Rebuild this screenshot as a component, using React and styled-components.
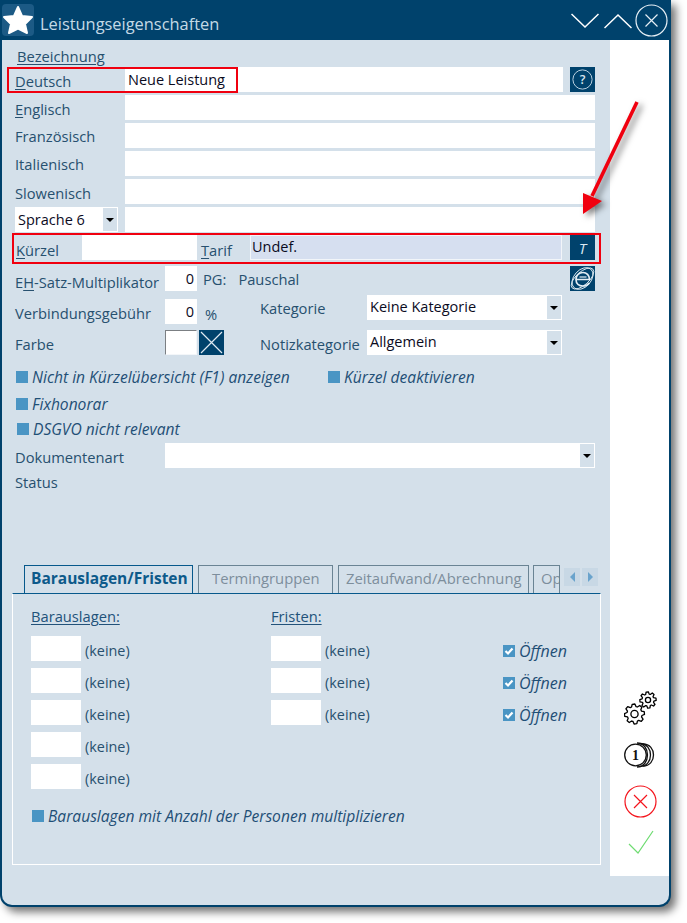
import React from "react";
import styled, { createGlobalStyle } from "styled-components";

const Global = createGlobalStyle`
  html, body { margin: 0; padding: 0; background: #fff; }
  body { font-family: "Open Sans", "Noto Sans", sans-serif; font-size: 14.7px; color: #27506f; }
  * { box-sizing: border-box; }
  u { text-underline-offset: 2px; }
`;

const BLUE = "#00426c";
const PANE = "#d4e0ea";

const Page = styled.div`position: relative; width: 687px; height: 923px; overflow: hidden;`;
const Window = styled.div`
  width: 671px; height: 907px; display: flex; flex-direction: column; background: ${PANE};
  border: 2px solid ${BLUE}; border-top: 0; border-radius: 0 0 12px 12px;
  box-shadow: 5px 5px 8px rgba(0,0,0,.55);
`;
const TitleBar = styled.div`
  height: 40px; margin: 0 -2px; background: ${BLUE}; display: flex; align-items: center;
  padding: 0 3px 0 2px; flex: none;
`;
const Logo = styled.div`
  width: 32px; height: 32px; background: #1c5a85; border-radius: 4px; display: flex;
  align-items: center; justify-content: center; flex: none; margin-top: -1px;
`;
const Title = styled.div`margin-left: 6px; font-size: 16.4px; color: #c4dae6; flex: 1; padding-top: 6px;`;
const WinControls = styled.div`display: flex; align-items: center;`;
const Body = styled.div`flex: 1; display: flex; min-height: 0;`;
const Main = styled.div`width: 608px; flex: none; padding: 0 15px 0 13px; display: flex; flex-direction: column;`;
const Side = styled.div`
  width: 60px; height: 836px; background: #fff; display: flex; flex-direction: column;
  align-items: center; padding: 0 0 21px 2px; justify-content: flex-end;
`;
const SideIcon = styled.div`display: flex; margin-top: ${p => p.$mt || 0}px;`;
const Heading = styled.div`height: 27px; padding: 7px 0 0 2px; line-height: 19px; text-decoration: underline; text-underline-offset: 2px;`;
const Rows = styled.div`display: flex; flex-direction: column; gap: 3px;`;
const Row = styled.div`display: flex; align-items: flex-start; height: 25px;`;
const Label = styled.div`
  width: ${p => p.$w || 110}px; flex: none; line-height: 19px; padding-top: ${p => p.$pt ?? 5}px;
  margin-left: ${p => p.$ml || 0}px; white-space: nowrap;
`;
const Field = styled.div`
  height: 25px; background: #fff; color: #0b0b1e; line-height: 25px; padding: 0 3px;
  font-size: 14.5px;
  width: ${p => (p.$w ? p.$w + "px" : "auto")}; flex: ${p => (p.$w ? "none" : 1)};
  text-align: ${p => p.$align || "left"}; white-space: nowrap; overflow: hidden;
  margin-left: ${p => p.$ml || 0}px;
`;
const Spacer = styled.div`flex: 1;`;
const TarifField = styled(Field)`background: #d6dff0; border: 1px solid #f2f5f9; line-height: 21px; padding: 0 1px;`;
const SquareBtn = styled.div`
  width: 25px; height: 25px; background: ${BLUE}; flex: none; display: flex; align-items: center;
  justify-content: center; color: #dce9f2; margin-left: ${p => p.$ml || 0}px; margin-top: ${p => p.$mt || 0}px;
`;
const TGlyph = styled.span`font-style: italic; font-size: 15px;`;
const SelectBox = styled.div`
  height: 25px; background: #fff; color: #0b0b1e; display: flex; width: ${p => p.$w ? p.$w + "px" : "auto"};
  flex: ${p => (p.$w ? "none" : 1)}; padding: 1px; margin-left: ${p => p.$ml || 0}px;
`;
const SelectText = styled.div`flex: 1; line-height: ${p => p.$lh || 22}px; padding-left: 2px; white-space: nowrap; font-size: 14.5px;`;
const SelectArrow = styled.div`
  width: 14px; background: ${PANE}; display: flex; align-items: center; justify-content: center;
  &::after { content: ""; border: 4px solid transparent; border-top: 4px solid #000; border-bottom: 0; }
`;
const PlainText = styled.div`line-height: 19px; padding-top: ${p => p.$pt ?? 0}px; margin-left: ${p => p.$ml || 0}px; white-space: nowrap;`;
const EhRow = styled(Row)`margin-top: 6px; height: 26px;`;
const Split = styled.div`display: flex; margin-top: 3px;`;
const SplitLeft = styled.div`width: 245px; flex: none; display: flex; flex-direction: column;`;
const SplitRight = styled.div`display: flex; flex-direction: column; gap: 10px;`;
const SplitRow = styled.div`display: flex; align-items: flex-start; height: 25px; margin-top: ${p => p.$mt || 0}px;`;
const ColorSwatch = styled.div`
  width: 32px; height: 25px; background: #fff; flex: none;
  border: 1px solid #f3f6f9; border-top-color: #7b7f83; border-left-color: #7b7f83;
`;
const CheckRow = styled.div`
  display: flex; align-items: center; height: 20px; font-style: italic; color: #1f4f76; font-size: 15.6px;
  margin: ${p => p.$mt || 0}px 0 0 ${p => p.$ml || 1}px; white-space: nowrap;
`;
const Square = styled.div`
  width: 12px; height: 12px; background: #4a95c4; margin-right: 4px; flex: none; display: flex;
  align-items: center; justify-content: center;
`;
const ChecksLine = styled.div`display: flex; margin-top: 12px;`;
const ChecksFirst = styled.div`width: 312px; flex: none;`;
const DocRow = styled(Row)`margin-top: 4px;`;
const Tabs = styled.div`margin: 73px 0 0 -3px; width: 589px; position: relative;`;
const TabStrip = styled.div`display: flex; height: 28px; padding-left: 12px; align-items: flex-end; overflow: hidden;`;
const Tab = styled.div`
  height: 28px; width: ${p => p.$w}px; margin-right: ${p => p.$mr ?? 4}px; flex: none; white-space: nowrap; overflow: hidden;
  border: 1px solid ${p => (p.$active ? "#07598c" : "#6a8494")}; border-bottom: 0;
  color: ${p => (p.$active ? "#0d5a8a" : "#7d8e9c")}; font-weight: ${p => (p.$active ? 700 : 400)};
  font-size: ${p => (p.$active ? 15.5 : 14.8)}px; line-height: 25px; padding-left: ${p => p.$pl ?? 6}px;
  position: relative; z-index: 1; background: ${PANE};
`;
const ScrollBtns = styled.div`position: absolute; right: 3px; top: 3px; display: flex; gap: 2px;`;
const ScrollBtn = styled.div`
  width: 16px; height: 18px; background: #c8d8e5; display: flex; align-items: center; justify-content: center;
  &::after {
    content: ""; border: 5px solid transparent; border-left-width: 0; border-right: 5px solid #6aa3cc;
    ${p => p.$right && "transform: scaleX(-1);"}
  }
`;
const Panel = styled.div`
  height: 272px; border: 1px solid #fff; border-top: 1px solid #07598c; padding: 12px 0 0 18px;
`;
const PanelGrid = styled.div`display: grid; grid-template-columns: 240px 232px auto;`;
const Column = styled.div`display: flex; flex-direction: column; gap: 7px;`;
const PanelHead = styled.div`
  height: 23px; line-height: 20px; text-decoration: underline; text-underline-offset: 2px;
  color: #22527a;
`;
const FeeRow = styled.div`display: flex; height: 25px; align-items: flex-start;`;
const FeeInput = styled.div`width: 50px; height: 25px; background: #fff; flex: none;`;
const FeeText = styled.div`margin-left: 4px; line-height: 19px; padding-top: 5px; font-size: 14.4px;`;
const OpenRow = styled.div`
  display: flex; height: 25px; align-items: center; font-style: italic; color: #1f4f76; font-size: 16px;
  padding-top: 5px;
`;
const FootCheck = styled(CheckRow)`margin: 17px 0 0 1px;`;

const Overlays = styled.div`position: absolute; inset: 0; pointer-events: none;`;
const RedBox = styled.div`
  position: absolute; left: ${p => p.$x}px; top: ${p => p.$y}px; width: ${p => p.$w}px; height: ${p => p.$h}px;
  border: 2px solid #f0000f;
`;
const ArrowSvg = styled.svg`position: absolute; left: 570px; top: 90px; overflow: visible; filter: drop-shadow(4px 3px 3px rgba(0,0,0,.5));`;

function gearPoints(cx, cy, R, r, teeth) {
  const pts = [];
  const step = (Math.PI * 2) / teeth;
  for (let i = 0; i < teeth; i++) {
    const a = i * step;
    [[-0.5, r], [-0.3, R], [0.05, R], [0.25, r]].forEach(([o, rad]) => {
      const t = a + o * step;
      pts.push(`${(cx + Math.cos(t) * rad).toFixed(2)},${(cy + Math.sin(t) * rad).toFixed(2)}`);
    });
  }
  return pts.join(" ");
}

const Star = () => (
  <svg width="32" height="32" viewBox="0 0 32 32">
    <polygon fill="#fff" stroke="#fff" strokeWidth="2" strokeLinejoin="round"
      points="16,3 20,12 30,13 23,20 25,29 16,24.5 7,29 9,20 2,13 12,12" />
  </svg>
);
const Chevron = ({ up }) => (
  <svg width="28" height="20" viewBox="0 0 28 20" fill="none" stroke="#fff" strokeWidth="1.5">
    <polyline points={up ? "0.5,18 14,5 27.5,18" : "0.5,4 14,17 27.5,4"} />
  </svg>
);
const ChevronGap = styled.div`width: ${p => p.$w}px;`;
const CloseCircle = () => (
  <svg width="33" height="33" viewBox="0 0 33 33" fill="none" stroke="#e6eff5" strokeWidth="1.2">
    <circle cx="16.5" cy="16.5" r="15.5" />
    <path d="M10.5 10.5 L22.5 22.5 M22.5 10.5 L10.5 22.5" />
  </svg>
);
const HelpIcon = () => (
  <svg width="21" height="21" viewBox="0 0 21 21" fill="none">
    <circle cx="10.5" cy="10.5" r="9.6" stroke="#b6cede" strokeWidth="1" />
    <text x="10.5" y="15" textAnchor="middle" fontSize="12.5" fontWeight="600" fontFamily="Open Sans" fill="#d8e6ef">?</text>
  </svg>
);
const IeIcon = () => (
  <svg width="25" height="25" viewBox="0 0 25 25" fill="none" stroke="#e2edf4" strokeWidth="0.9">
    <ellipse cx="12.5" cy="12.5" rx="14" ry="6.5" transform="rotate(-42 12.5 12.5)" />
    <ellipse cx="12.5" cy="12.5" rx="12.5" ry="8.5" transform="rotate(-48 12.5 12.5)" />
    <path d="M6.5 13.5 H19.5 C19.5 9 16.5 6.5 13 6.5 C9 6.5 6 9.5 6 13.5 C6 17.5 9 20 13 20 C15.5 20 17.8 19 19.3 17" strokeWidth="1.7" />
    <path d="M9.5 11 H16.5" strokeWidth="1.2" />
  </svg>
);
const CrossSquare = () => (
  <svg width="25" height="25" viewBox="0 0 25 25" stroke="#dfeaf2" strokeWidth="1.2">
    <path d="M2 2 L23 23 M23 2 L2 23" />
  </svg>
);
const Gears = () => (
  <svg width="33" height="35" viewBox="0 0 33 35" fill="none" stroke="#000" strokeWidth="1.3" strokeLinejoin="round">
    <polygon points={gearPoints(10.5, 23, 10, 7.6, 8)} />
    <circle cx="10.5" cy="23" r="3.6" />
    <polygon points={gearPoints(24, 9, 8.2, 6, 8)} />
    <circle cx="24" cy="9" r="2.6" />
  </svg>
);
const Coins = () => (
  <svg width="33" height="26" viewBox="0 0 33 26" fill="none" stroke="#111" strokeWidth="1.3">
    <path d="M19 2 C33 2 33 24 19 24" />
    <path d="M16 1.5 C30 1.5 30 24.5 16 24.5" />
    <path d="M13 1 C27 1 27 25 13 25" />
    <circle cx="11.5" cy="13" r="10.8" fill="#fff" />
    <text x="11.5" y="18" textAnchor="middle" fontSize="14" fontWeight="700" fontFamily="Liberation Serif" fill="#111" stroke="none">1</text>
  </svg>
);
const CancelIcon = () => (
  <svg width="33" height="33" viewBox="0 0 33 33" fill="none" stroke="#f4141c" strokeWidth="1.2">
    <circle cx="16.5" cy="16.5" r="15.5" />
    <path d="M10 10 L23 23 M23 10 L10 23" />
  </svg>
);
const OkIcon = () => (
  <svg width="26" height="25" viewBox="0 0 26 25" fill="none" stroke="#6fdc72" strokeWidth="1.2">
    <path d="M1 14 L10 23 L25 1" />
  </svg>
);
const Tick = () => (
  <svg width="12" height="12" viewBox="0 0 12 12" fill="none" stroke="#fff" strokeWidth="2.2"><path d="M2.5 6 L5 8.5 L9.5 3.5" /></svg>
);

const LANGS = [
  { key: "en", text: <><u>E</u>nglisch</>, pt: 5 },
  { key: "fr", text: "Französisch", pt: 4 },
  { key: "it", text: "Italienisch", pt: 4 },
  { key: "sl", text: "Slowenisch", pt: 5 },
];

export default function App() {
  return (
    <Page>
      <Global />
      <Window>
        <TitleBar>
          <Logo><Star /></Logo>
          <Title>Leistungseigenschaften</Title>
          <WinControls>
            <Chevron />
            <ChevronGap $w={5} />
            <Chevron up />
            <ChevronGap $w={3} />
            <CloseCircle />
          </WinControls>
        </TitleBar>
        <Body>
          <Main>
            <Heading>Bezeichnung</Heading>
            <Rows>
              <Row>
                <Label><u>D</u>eutsch</Label>
                <Field>Neue Leistung</Field>
                <SquareBtn $ml={7}><HelpIcon /></SquareBtn>
              </Row>
              {LANGS.map(l => (
                <Row key={l.key}>
                  <Label $pt={l.pt}>{l.text}</Label>
                  <Field />
                </Row>
              ))}
              <Row>
                <SelectBox $w={103}><SelectText $lh={24}>Sprache 6</SelectText><SelectArrow /></SelectBox>
                <Field $ml={7} />
              </Row>
              <Row>
                <Label $w={66} $ml={1} $pt={6}><u>K</u>ürzel</Label>
                <Field $w={115} />
                <Label $w={49} $ml={4} $pt={6}><u>T</u>arif</Label>
                <TarifField>Undef.</TarifField>
                <SquareBtn $ml={8}><TGlyph>T</TGlyph></SquareBtn>
              </Row>
            </Rows>
            <EhRow>
              <Label $w={150} $pt={7}>E<u>H</u>-Satz-Multiplikator</Label>
              <Field $w={32} $align="right">0</Field>
              <PlainText $ml={6} $pt={4}>PG:</PlainText>
              <PlainText $ml={12} $pt={4}>Pauschal</PlainText>
              <Spacer />
              <SquareBtn><IeIcon /></SquareBtn>
            </EhRow>
            <Split>
              <SplitLeft>
                <SplitRow $mt={4}>
                  <Label $w={150}>Verbindungsgebühr</Label>
                  <Field $w={32} $align="right">0</Field>
                  <PlainText $ml={8} $pt={6}>%</PlainText>
                </SplitRow>
                <SplitRow $mt={6}>
                  <Label $w={150} $pt={5}>Farbe</Label>
                  <ColorSwatch />
                  <SquareBtn $ml={2}><CrossSquare /></SquareBtn>
                </SplitRow>
              </SplitLeft>
              <SplitRight>
                <SplitRow>
                  <Label $w={107} $pt={4}>Kategorie</Label>
                  <SelectBox $w={195}><SelectText>Keine Kategorie</SelectText><SelectArrow /></SelectBox>
                </SplitRow>
                <SplitRow>
                  <Label $w={107}>Notizkategorie</Label>
                  <SelectBox $w={195}><SelectText>Allgemein</SelectText><SelectArrow /></SelectBox>
                </SplitRow>
              </SplitRight>
            </Split>
            <ChecksLine>
              <ChecksFirst><CheckRow><Square />Nicht in Kürzelübersicht (F1) anzeigen</CheckRow></ChecksFirst>
              <CheckRow><Square />Kürzel deaktivieren</CheckRow>
            </ChecksLine>
            <CheckRow $mt={7}><Square />Fixhonorar</CheckRow>
            <CheckRow $mt={5} $ml={2}><Square />DSGVO nicht relevant</CheckRow>
            <DocRow>
              <Label $w={150} $pt={5}>Dokumentenart</Label>
              <SelectBox><SelectText /><SelectArrow /></SelectBox>
            </DocRow>
            <PlainText $pt={5}>Status</PlainText>
            <Tabs>
              <TabStrip>
                <Tab $active $w={169} $mr={5}>Barauslagen/Fristen</Tab>
                <Tab $w={135} $mr={5} $pl={13}>Termingruppen</Tab>
                <Tab $w={191} $pl={7}>Zeitaufwand/Abrechnung</Tab>
                <Tab $w={27} $mr={0} $pl={7}>Op</Tab>
              </TabStrip>
              <ScrollBtns><ScrollBtn /><ScrollBtn $right /></ScrollBtns>
              <Panel>
                <PanelGrid>
                  <Column>
                    <PanelHead>Barauslagen:</PanelHead>
                    {[0, 1, 2, 3, 4].map(i => (
                      <FeeRow key={i}><FeeInput /><FeeText>(keine)</FeeText></FeeRow>
                    ))}
                  </Column>
                  <Column>
                    <PanelHead>Fristen:</PanelHead>
                    {[0, 1, 2].map(i => (
                      <FeeRow key={i}><FeeInput /><FeeText>(keine)</FeeText></FeeRow>
                    ))}
                  </Column>
                  <Column>
                    <PanelHead />
                    {[0, 1, 2].map(i => (
                      <OpenRow key={i}><Square><Tick /></Square>Öffnen</OpenRow>
                    ))}
                  </Column>
                </PanelGrid>
                <FootCheck><Square />Barauslagen mit Anzahl der Personen multiplizieren</FootCheck>
              </Panel>
            </Tabs>
          </Main>
          <Side>
            <SideIcon><Gears /></SideIcon>
            <SideIcon $mt={16}><Coins /></SideIcon>
            <SideIcon $mt={17}><CancelIcon /></SideIcon>
            <SideIcon $mt={12}><OkIcon /></SideIcon>
          </Side>
        </Body>
      </Window>
      <Overlays>
        <RedBox $x={7} $y={67} $w={231} $h={26} />
        <RedBox $x={12} $y={233} $w={589} $h={31} />
        <ArrowSvg width="70" height="130">
          <line x1="67" y1="12" x2="22" y2="106" stroke="#f0000f" strokeWidth="3.6" />
          <polygon points="13,124 13,103 32,111" fill="#f0000f" />
        </ArrowSvg>
      </Overlays>
    </Page>
  );
}
